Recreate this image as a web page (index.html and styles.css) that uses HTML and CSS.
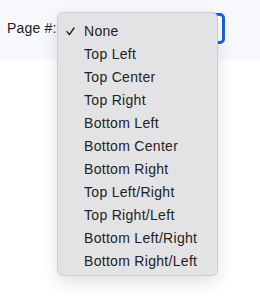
FILE: index.html
```html
<!DOCTYPE html>
<html lang="en">

<head>
    <meta charset="UTF-8" />
    <meta name="viewport" content="width=device-width, initial-scale=1.0" />
    <title>Page number</title>
    <link rel="stylesheet" href="styles.css">
</head>

<body>
    <div class="toolbar">
        <label class="field-label">Page #:</label>
        <div class="select-box"></div>

        <ul class="dropdown">
            <li class="option selected">
                <svg class="check" width="9" height="9" viewBox="0 0 9 9">
                    <path d="M1 4.6 L3.4 7.6 L8 1" fill="none" stroke="#222" stroke-width="1.4" stroke-linecap="round" stroke-linejoin="round" />
                </svg>
                None
            </li>
            <li class="option">Top Left</li>
            <li class="option">Top Center</li>
            <li class="option">Top Right</li>
            <li class="option">Bottom Left</li>
            <li class="option">Bottom Center</li>
            <li class="option">Bottom Right</li>
            <li class="option">Top Left/Right</li>
            <li class="option">Top Right/Left</li>
            <li class="option">Bottom Left/Right</li>
            <li class="option">Bottom Right/Left</li>
        </ul>
    </div>
    <div class="page"></div>
</body>

</html>
```

FILE: styles.css
```css
:root {
    --bar-color: #f7f8fb;
    --menu-color: #e3e3e5;
    --text-color: #222;
    --focus-color: #1f5fd1;
}

html,
body {
    height: 100%;
}

body {
    margin: 0;
    padding: 0;
    font-family: 'Liberation Sans', Arial, sans-serif;
    font-size: 14px;
    color: var(--text-color);
    background: #fff;
    display: flex;
    flex-direction: column;
}

.toolbar {
    position: relative;
    z-index: 2;
    height: 60px;
    flex: none;
    background: var(--bar-color);
    display: flex;
    align-items: flex-start;
    padding: 13px 0 0 7px;
    box-sizing: border-box;
}

.page {
    flex: 1;
    background: #fff;
}

.field-label {
    line-height: 31px;
    width: 53px;
    letter-spacing: 0.2px;
}

.select-box {
    width: 165px;
    height: 31px;
    box-sizing: border-box;
    border: 3px solid var(--focus-color);
    border-radius: 5px;
    background: #fff;
}

.dropdown {
    position: absolute;
    left: 57px;
    top: 12px;
    width: 161px;
    height: 264px;
    box-sizing: border-box;
    margin: 0;
    padding: 7px 0 0;
    list-style: none;
    background: var(--menu-color);
    border: 1px solid #cfcfd1;
    border-radius: 6px;
    box-shadow: 0 6px 16px rgba(0, 0, 0, 0.12);
}

.option {
    position: relative;
    height: 23px;
    line-height: 23px;
    padding-left: 26px;
    white-space: nowrap;
    letter-spacing: 0.3px;
}

.check {
    position: absolute;
    left: 8px;
    top: 7px;
}
```
